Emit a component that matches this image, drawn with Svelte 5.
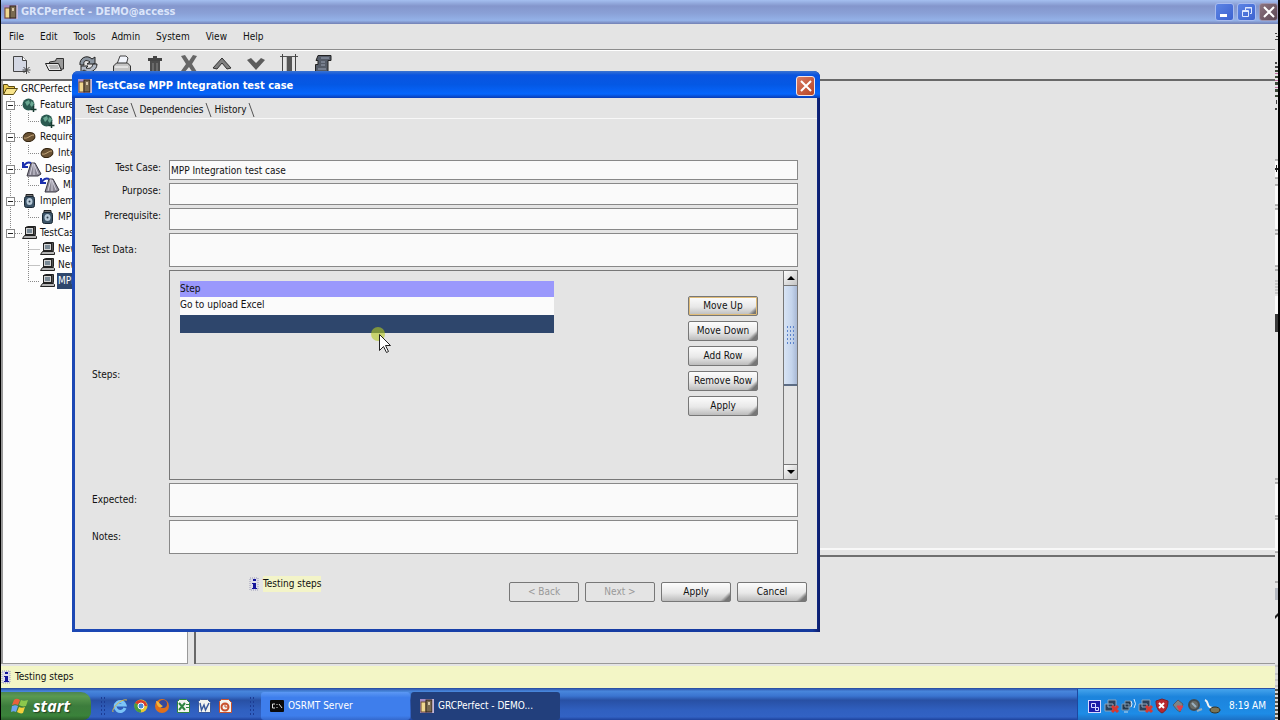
<script>
  const menus = ['File', 'Edit', 'Tools', 'Admin', 'System', 'View', 'Help'];
  const tools = ['New', 'Open', 'Refresh', 'Print', 'Trash', 'Delete', 'Up', 'Down', 'Columns', 'Report'];

  const tree = [
    { label: 'Feature', icon: 'globe', items: ['MPP'] },
    { label: 'Require', icon: 'bean', items: ['Inte'] },
    { label: 'Design', icon: 'design', items: ['MP'] },
    { label: 'Implem', icon: 'jar', items: ['MPP'] },
    { label: 'TestCas', icon: 'pc', items: ['New', 'New', 'MPP'] }
  ];

  const tabs = ['Test Case', 'Dependencies', 'History'];
  const stepActions = ['Move Up', 'Move Down', 'Add Row', 'Remove Row', 'Apply'];
  const launchers = ['Internet Explorer', 'Chrome', 'Firefox', 'Excel', 'Word', 'PowerPoint'];

  let activeTab = $state('Test Case');
  let testCase = $state('MPP Integration test case');
  let steps = $state(['Go to upload Excel', '']);
  let selectedStep = $state(1);
</script>

{#snippet appIcon()}
  <svg class="app-icon" width="14" height="14" viewBox="0 0 14 14" aria-hidden="true">
    <rect width="14" height="14" fill="#a58cc8" />
    <rect x="1" y="3" width="5" height="10" fill="#f0d890" stroke="#6a4a30" />
    <rect x="6" y="1" width="6" height="12" fill="#7a6a50" stroke="#33261c" />
    <path d="M8 3h2v3H8z" fill="#d8c8a8" />
    <path d="M13 0v14" stroke="#e4e0ec" />
  </svg>
{/snippet}

{#snippet infoIcon()}
  <svg width="10" height="14" viewBox="0 0 10 14" aria-hidden="true">
    <rect x="1" y="1" width="8" height="12" fill="#dcdce8" stroke="#9a9ab4" stroke-dasharray="1 1" />
    <path d="M4 2h3v2H4zM3 6h4v5h1v1H3v-1h1V7H3z" fill="#14149a" />
  </svg>
{/snippet}

{#snippet toolIcon(name)}
  <svg width="20" height="20" viewBox="0 0 20 20" fill="none" aria-hidden="true">
    {#if name === 'New'}
      <path d="M2.5 2.5h9l4 4v11h-13z" fill="#d4d8e4" stroke="#444" />
      <path d="M11.5 2.5v4h4" stroke="#444" fill="#fff" />
      <path d="M15.5 12v8M11.5 16h8M12.500 13l6 6M18.500 13l-6 6" stroke="#444" />
    {:else if name === 'Open'}
      <path d="M4.500 16V8l6-1 1-2.500h7V15z" fill="#9a9a9a" stroke="#333" />
      <path d="M.5 9.500h13l3 7H4z" fill="#e8e8e8" stroke="#222" />
      <path d="M4 12h9M5 14h9" stroke="#888" />
    {:else if name === 'Refresh'}
      <path d="M2 11C1 4 9 0 14 5l3-2v7h-8l3-2C8 5 5 7 6 11z" fill="#8b95a0" stroke="#222" />
      <path d="M19 10c0 7-8 10-13 6l-3 2v-6h7l-2 2c4 1 6 0 7-4z" fill="#b0b8c4" stroke="#222" />
    {:else if name === 'Print'}
      <path d="M5 10l3-8h6l2 2-2 7" fill="#f2f5fc" stroke="#444" />
      <path d="M1.500 12l3-3h11l3 3v6h-17z" fill="#c4c4c4" stroke="#333" />
      <path d="M3 13h13" stroke="#fff" />
    {:else if name === 'Trash'}
      <path d="M3 4h14v3H3zM8 2h4v2H8z" fill="#444" />
      <path d="M5 7h10v13H5z" fill="#4c4c4c" />
      <path d="M8 9v10M12 9v10" stroke="#888" />
    {:else if name === 'Delete'}
      <path d="M2 2l4-1 4 6 4-6 4 1-5 8 5 8-4 1-4-6-5 6-3-2 5-7z" fill="#666" />
    {:else if name === 'Up'}
      <path d="M1 14l9-10 9 10-4 1-5-6-5 6z" fill="#808080" stroke="#333" />
    {:else if name === 'Down'}
      <path d="M1 6l4-2 5 5 5-5 4 2-9 10z" fill="#5c5c5c" />
    {:else if name === 'Columns'}
      <path d="M1 2.500h18" stroke="#555" />
      <path d="M3.500 0v19M16.500 0v19" stroke="#444" />
      <rect x="7" y="3" width="6" height="16" fill="#555" />
      <path d="M7.500 3v16" stroke="#bbb" />
    {:else}
      <path d="M5 1.500h13v5h-3v12H2.500v-8H5V6.500H3z" fill="#555c68" stroke="#222" />
      <path d="M8 4h8M8 8h4M8 11h4M5 15h8" stroke="#9aa2b4" />
    {/if}
  </svg>
{/snippet}

{#snippet treeIcon(name)}
  <svg width={name === 'design' ? 20 : 15} height="16" viewBox="0 0 {name === 'design' ? 20 : 15} 16" fill="none" aria-hidden="true">
    {#if name === 'globe'}
      <circle cx="6.500" cy="7.500" r="6" fill="#2a5a50" />
      <path d="M3 5l4-2 1 3-3 3zM9 4l3 2-2 4-2-2z" fill="#6aa892" />
      <path d="M11.500 9v6M8.500 12.500h6" stroke="#153a30" stroke-width="1.500" />
    {:else if name === 'bean'}
      <ellipse cx="7" cy="8" rx="6" ry="4.500" fill="#6a5234" stroke="#33240f" transform="rotate(-12 7 8)" />
      <path d="M2 9c4 1 6-3 10-3" stroke="#c8aa7c" />
    {:else if name === 'design'}
      <path d="M5 15L9 2h4l6 11-3 2z" fill="#8a8794" stroke="#3a3844" />
      <path d="M8 14l3-12M12 14V3M16 13L12 3" stroke="#d4d2de" />
      <path d="M2 5c1-3 4-4 7-3M1 1v5h5" stroke="#1b2fae" stroke-width="2" />
    {:else if name === 'jar'}
      <path d="M4 1.500h7v2H4z" fill="#777" stroke="#222" />
      <rect x="2.500" y="3.500" width="10" height="11" rx="2" fill="#3c5468" stroke="#1a2834" />
      <ellipse cx="7.500" cy="8.500" rx="3" ry="3.500" fill="#b8cad8" />
      <circle cx="7.500" cy="8.500" r="1" fill="#2a3c4c" />
    {:else}
      <path d="M3.500 2.500l2-1h8v8l-2 1h-8z" fill="#555" stroke="#222" />
      <rect x="3.500" y="2.500" width="8" height="7" fill="#d4d4d4" stroke="#222" />
      <rect x="5" y="4" width="5" height="4" fill="#7a8a96" />
      <path d="M.5 13.500l2-3h11l1 1v2z" fill="#b4b4b4" stroke="#222" />
    {/if}
  </svg>
{/snippet}

{#snippet branch(last)}
  <svg width="19" height="16" viewBox="0 0 19 16" fill="none" aria-hidden="true">
    <path d={last ? 'M7.500 0V8' : 'M7.500 0V16'} stroke="#888" stroke-dasharray="1 1" />
    <path d="M12 8.500h7" stroke="#888" stroke-dasharray="1 1" />
    <rect x="3.500" y="4.500" width="8" height="8" fill="#fff" stroke="#888" />
    <path d="M5 8.500h5" stroke="#222" />
  </svg>
{/snippet}

{#snippet leaf(lastGroup, last)}
  <svg width="37" height="16" viewBox="0 0 37 16" fill="none" aria-hidden="true">
    {#if !lastGroup}
      <path d="M7.500 0V16" stroke="#888" stroke-dasharray="1 1" />
    {/if}
    <path d={last ? 'M25.500 0V8.500h12' : 'M25.500 0V16M25.500 8.500h12'} stroke="#888" stroke-dasharray="1 1" />
  </svg>
{/snippet}

{#snippet launchIcon(name)}
  <svg width="16" height="16" viewBox="0 0 16 16" fill="none" aria-hidden="true">
    {#if name === 'Internet Explorer'}
      <path d="M13 10a5 5 0 1 1 0-3H5" stroke="#7cc4f8" stroke-width="3" />
      <path d="M1 14C-1 11 9 0 15 2" stroke="#d8b84c" />
    {:else if name === 'Chrome'}
      <circle cx="8" cy="8" r="6.500" fill="#e8c832" />
      <path d="M8 8L2 5a6.500 6.500 0 0 1 12 3z" fill="#d83c2c" />
      <path d="M8 8L2 5a6.500 6.500 0 0 0 6 9.500z" fill="#4a9c40" />
      <circle cx="8" cy="8" r="3" fill="#4a88d8" stroke="#fff" />
    {:else if name === 'Firefox'}
      <circle cx="8" cy="8" r="7" fill="#e0701c" />
      <circle cx="9" cy="6" r="4" fill="#35489c" />
      <path d="M2 3c3 0 4 4 7 5-3 3-6 1-7-5z" fill="#f4b83c" />
    {:else}
      {@const color = name === 'Excel' ? '#2f8440' : name === 'Word' ? '#3a5a9c' : '#c8502c'}
      <path d="M4.500 1.500h7l3 3v10h-12v-11z" fill="#f4f4f0" stroke={color} />
      {#if name === 'Excel'}
        <path d="M4 5l6 7M10 5l-6 7" stroke={color} stroke-width="2" />
        <path d="M11 6.500h3M11 9.500h3" stroke={color} />
      {:else if name === 'Word'}
        <path d="M4 5l1.500 7L8 7l1.500 5L13 5" stroke={color} stroke-width="1.500" />
      {:else}
        <circle cx="8" cy="9" r="3.500" stroke={color} stroke-width="2" />
        <path d="M8 9V5M8 9h4" stroke={color} />
      {/if}
    {/if}
  </svg>
{/snippet}

<div class="desktop">
  <header class="titlebar">
    {@render appIcon()}
    <h1>GRCPerfect - DEMO@access</h1>
    <div class="controls">
      <button aria-label="Minimize">
        <svg width="12" height="12" viewBox="0 0 12 12"><path d="M1 8h7v3H1z" fill="#fff" /></svg>
      </button>
      <button aria-label="Restore">
        <svg width="12" height="12" viewBox="0 0 12 12" fill="none" stroke="#dfe8ff">
          <path d="M4.500 4V1.500h6v6H9M4 2h7" />
          <path d="M1.500 4.500h6v6h-6zM1 5.500h7" />
        </svg>
      </button>
      <button class="close" aria-label="Close">
        <svg width="12" height="12" viewBox="0 0 12 12"><path d="M1 1l10 10M11 1L1 11" stroke="#fff" stroke-width="2" /></svg>
      </button>
    </div>
  </header>

  <nav class="menubar">
    {#each menus as menu}
      <button>{menu}</button>
    {/each}
  </nav>

  <div class="toolbar">
    <div class="tools">
      {#each tools as tool}
        <button aria-label={tool}>{@render toolIcon(tool)}</button>
      {/each}
    </div>
  </div>

  <main class="workspace">
    <aside class="tree">
      <div class="node root">
        <svg width="15" height="14" viewBox="0 0 15 14" aria-hidden="true">
          <path d="M.5 12V2.500h4l1 2h6v3" fill="#e8c850" stroke="#5a4a10" />
          <path d="M.5 12.500l3-6h11l-4 6z" fill="#f8e48c" stroke="#5a4a10" />
        </svg>
        <span>GRCPerfect</span>
      </div>
      {#each tree as group, g}
        <div class="node">
          {@render branch(g === tree.length - 1)}
          {@render treeIcon(group.icon)}
          <span>{group.label}</span>
        </div>
        {#each group.items as item, i}
          <div class="node" class:selected={g === 4 && i === 2}>
            {@render leaf(g === tree.length - 1, i === group.items.length - 1)}
            {@render treeIcon(group.icon)}
            <span>{item}</span>
          </div>
        {/each}
      {/each}
    </aside>
    <section class="panes">
      <div class="list"></div>
      <div class="detail"></div>
    </section>
  </main>

  <div class="status">
    {@render infoIcon()}
    <span>Testing steps</span>
  </div>

  <footer class="taskbar">
    <button class="start">
      <svg width="18" height="18" viewBox="0 0 18 18" aria-hidden="true">
        <path d="M3 3c2-2 4-1 6 0L7 8C5 7 4 7 1 8z" fill="#e8603c" />
        <path d="M10 3c2 1 4 1 7 0l-2 6c-3 1-5 0-7-1z" fill="#8cc84c" />
        <path d="M1 9c3-1 4-1 6 0l-2 6c-2-1-3-1-5 0z" fill="#6aa4f0" />
        <path d="M8 10c2 1 4 1 6 0l-2 6c-2 1-4 0-6-1z" fill="#f4d03c" />
      </svg>
      start
    </button>
    <div class="grip"></div>
    <div class="launch">
      {#each launchers as name}
        <button aria-label={name}>{@render launchIcon(name)}</button>
      {/each}
    </div>
    <div class="grip"></div>
    <button class="task">
      <svg width="14" height="12" viewBox="0 0 14 12" aria-hidden="true">
        <rect width="14" height="12" rx="1" fill="#0a0a0a" />
        <path d="M5 4H2.500v4H5M7 4v1M7 7v1M9 4l3 4" fill="none" stroke="#ddd" />
      </svg>
      OSRMT Server
    </button>
    <button class="task active">
      {@render appIcon()}
      GRCPerfect - DEMO...
    </button>
    <div class="tray">
      <svg width="134" height="16" viewBox="0 0 134 16" fill="none" aria-hidden="true">
        <rect x="1.500" y="2.500" width="12" height="12" fill="#1c1ca8" stroke="#d8d8ff" />
        <path d="M4.500 5.500h4v4h-4zM8.500 9.500h3v3h-3z" stroke="#d8d8ff" />
        <path d="M21 2h8v7h-8zM18 6h8v7h-8z" fill="#2c4058" stroke="#8ca4bc" />
        <path d="M25 8l6 6M31 8l-6 6" stroke="#d83830" stroke-width="3" />
        <path d="M38 3h6v6h-6zM35 6h7v6h-7z" fill="#24384c" stroke="#7c94ac" />
        <path d="M37 14h4" stroke="#c4d8e8" />
        <path d="M44 3q2 3 0 6M47 1q3 5 0 9" stroke="#d8ecff" />
        <path d="M55 2h8v7h-8zM52 6h8v7h-8z" fill="#2c4058" stroke="#8ca4bc" />
        <path d="M59 8l6 6M65 8l-6 6" stroke="#d83830" stroke-width="3" />
        <path d="M69 3l6-2 6 2c0 6-2 10-6 12-4-2-6-6-6-12z" fill="#b82830" stroke="#802028" />
        <path d="M72 5l5 5M77 5l-5 5" stroke="#fff" stroke-width="2" />
        <path d="M86 7l5-5 5 4-3 8-3-2z" fill="#7c8488" stroke="#4c5c6c" />
        <path d="M90 8l6 0-3 5z" fill="#e0404c" stroke="#e0404c" />
        <circle cx="107" cy="7" r="5" fill="#686c68" stroke="#444c50" stroke-width="2" />
        <path d="M105 5l4 4M110 13l5-2" stroke="#98b0c0" stroke-width="2" />
        <path d="M118 2c5 2 0 7 8 8" stroke="#f4f4f4" stroke-width="2" />
        <ellipse cx="128" cy="12" rx="5" ry="3" fill="#7c7454" stroke="#343020" />
      </svg>
      <time>8:19 AM</time>
    </div>
  </footer>

  <!-- neighbouring monitor showing at the right edge -->
  <svg class="edge" width="3" height="720" viewBox="0 0 3 720" aria-hidden="true">
    <rect y="24" width="3" height="696" fill="#e4e4e4" />
    <path d="M0 33h2v1H0zM1 36h2v1H1zM0 39h3v1H0zM0 62h2v2H0zM0 66h3v2H0zM1 100h1v4H1zM0 108h2v2H0z" fill="#444" />
    <path d="M0 70h3v2H0zM0 76h3v2H0zM0 82h3v3H0zM0 89h3v3H0zM0 95h3v2H0z" fill="#3c4838" />
    <path d="M0 73h3v1H0zM0 80h3v1H0zM0 87h3v1H0z" fill="#b86c9c" />
    <path d="M0 160h3v18H0zM0 185h3v20H0zM0 209h3v21H0zM0 234h3v32H0zM0 296h3v18H0zM0 483h3v33H0zM0 519h3v33H0z" fill="#fafafa" />
    <path d="M0 160h3M0 178h3M0 185h3M0 205h3M0 209h3M0 230h3M0 234h3M0 266h3M0 270h3M0 479h3M0 483h3M0 516h3M0 519h3M0 552h3M0 582h3" stroke="#777" />
    <path d="M0 168h3v2H0zM1 165h1v7H1z" fill="#222" />
    <path d="M0 281h3M0 284h3M0 287h3M0 290h3M0 293h3" stroke="#aaa" />
    <rect y="314" width="3" height="18" fill="#3a3a3a" />
    <path d="M0 588h3v12H0z" fill="#b4b8c0" />
    <path d="M0 616l3-3v3l-3 3z" fill="#222" />
    <rect y="664" width="3" height="56" fill="#dcdcdc" />
    <path d="M0 666h3M0 674h3M0 680h3M0 686h3" stroke="#aaa" />
    <path d="M0 690h3M0 694h3M0 698h3M0 702h3M0 706h3M0 710h3M0 714h3M0 718h3" stroke="#55554c" stroke-width="2" />
  </svg>

  <div class="dialog" role="dialog" aria-labelledby="dialog-title">
    <header class="dialog-title">
      {@render appIcon()}
      <h2 id="dialog-title">TestCase MPP Integration test case</h2>
      <button class="dialog-close" aria-label="Close dialog">
        <svg width="12" height="12" viewBox="0 0 12 12"><path d="M1 1l10 10M11 1L1 11" stroke="#fff" stroke-width="2" /></svg>
      </button>
    </header>

    <div class="dialog-body">
      <div class="tabs" role="tablist">
        {#each tabs as tab}
          <button role="tab" aria-selected={tab === activeTab} class:active={tab === activeTab} onclick={() => (activeTab = tab)}>
            {tab}
          </button>
          <svg width="7" height="16" viewBox="0 0 7 16" aria-hidden="true">
            <path d="M1 1l5 14" stroke="#555" fill="none" />
          </svg>
        {/each}
      </div>

      <div class="form">
        <label class="short" for="test-case">Test Case:</label>
        <input id="test-case" class="first" type="text" bind:value={testCase} />
        <label class="short" for="purpose">Purpose:</label>
        <input id="purpose" type="text" />
        <label class="short" for="prerequisite">Prerequisite:</label>
        <input id="prerequisite" type="text" />
        <label for="test-data">Test Data:</label>
        <textarea id="test-data"></textarea>

        <span class="label">Steps:</span>
        <div class="steps">
          <table>
            <thead>
              <tr><th>Step</th></tr>
            </thead>
            <tbody>
              {#each steps as step, i}
                <tr class:selected={i === selectedStep} onclick={() => (selectedStep = i)}><td>{step}</td></tr>
              {/each}
            </tbody>
          </table>
          <div class="step-actions">
            {#each stepActions as action, i}
              <button class="metal" class:focused={i === 0}>{action}</button>
            {/each}
          </div>
          <div class="scrollbar">
            <button aria-label="Scroll up">
              <svg width="8" height="4" viewBox="0 0 8 4"><path d="M0 4l4-4 4 4z" /></svg>
            </button>
            <div class="track">
              <div class="thumb"><div class="bumps"></div></div>
            </div>
            <button aria-label="Scroll down">
              <svg width="8" height="4" viewBox="0 0 8 4"><path d="M0 0l4 4 4-4z" /></svg>
            </button>
          </div>
        </div>

        <label for="expected">Expected:</label>
        <textarea id="expected"></textarea>
        <label for="notes">Notes:</label>
        <textarea id="notes"></textarea>
      </div>

      <div class="dialog-footer">
        <div class="hint">
          {@render infoIcon()}
          <span>Testing steps</span>
        </div>
        <button class="metal" disabled>&lt; Back</button>
        <button class="metal" disabled>Next &gt;</button>
        <button class="metal">Apply</button>
        <button class="metal">Cancel</button>
      </div>
    </div>
  </div>

  <svg class="cursor" width="24" height="28" viewBox="0 0 24 28" aria-hidden="true">
    <circle cx="7" cy="7" r="7" fill="#b4c820" fill-opacity="0.6" />
    <path d="M8.500 7.500v16l4-4 3 6 2-1-3-6h5z" fill="#fff" stroke="#222" />
  </svg>
</div>

<style>
  :global(body) {
    margin: 0;
    background: #000;
  }

  .desktop {
    position: relative;
    display: flex;
    flex-direction: column;
    min-height: 100vh;
    box-sizing: border-box;
    background: #e4e4e4;
    border-right: 2px solid #000;
    border-left: 1px solid #000;
    overflow: hidden;
    font-family: 'DejaVu Sans Condensed', 'DejaVu Sans', sans-serif;
    font-size: 10px;
    line-height: 16px;
    color: #111;
  }

  button,
  input,
  textarea {
    font: inherit;
    color: inherit;
    margin: 0;
    padding: 0;
    border: 0;
    box-sizing: border-box;
  }

  button {
    background: none;
    white-space: nowrap;
  }

  svg {
    display: block;
    flex: none;
  }

  h1,
  h2 {
    margin: 0;
    flex: 1;
    font-size: 11px;
    font-weight: bold;
  }

  /* Main window */
  .titlebar {
    display: flex;
    align-items: center;
    gap: 3px;
    height: 24px;
    box-sizing: border-box;
    padding-left: 3px;
    background: linear-gradient(#a4bff0, #8496cc 25%, #8aa0d6 55%, #94b2e8 85%, #7280b4);
  }

  .titlebar h1 {
    color: #dbe5fa;
  }

  .controls {
    display: flex;
    gap: 3px;
  }

  .controls button {
    display: flex;
    align-items: center;
    justify-content: center;
    width: 19px;
    height: 18px;
    border: 1px solid #a8bcf0;
    border-radius: 3px;
    background: linear-gradient(135deg, #5c84e4, #3c62d0);
  }

  .controls .close {
    background: linear-gradient(135deg, #8c7480, #5c4854);
    border-color: #9c94b0;
  }

  .menubar {
    display: flex;
    align-items: center;
    gap: 16px;
    height: 26px;
    box-sizing: border-box;
    padding-left: 8px;
    border-bottom: 1px solid #8c8c8c;
  }

  .toolbar {
    height: 31px;
    box-sizing: border-box;
    padding: 3px 10px;
    border-top: 1px solid #fff;
    border-bottom: 2px solid #686868;
  }

  .tools {
    display: flex;
    justify-content: space-between;
    max-width: 322px;
  }

  .workspace {
    display: flex;
    flex: 1;
    gap: 6px;
    padding-bottom: 2px;
  }

  .tree {
    width: 187px;
    box-sizing: border-box;
    border: 1px solid #999;
    border-width: 0 1px 1px 2px;
    background: #fdfdfd;
    overflow: hidden;
  }

  .node {
    display: flex;
    align-items: center;
    gap: 2px;
    height: 16px;
    white-space: nowrap;
  }

  .node svg:first-child {
    margin-right: -2px;
  }

  .node.root svg:first-child {
    margin-right: 0;
  }

  .node span {
    padding: 0 1px;
  }

  .node.selected span {
    background: #2e466c;
    color: #fff;
  }

  .panes {
    display: flex;
    flex-direction: column;
    flex: 1;
    border-left: 2px solid #686868;
  }

  .list {
    flex: 1;
    border-bottom: 2px solid #f8f8f8;
  }

  .detail {
    height: 106px;
    margin-top: 5px;
    border-top: 2px solid #707070;
    border-bottom: 1px solid #999;
  }

  .status {
    display: flex;
    align-items: center;
    gap: 4px;
    height: 22px;
    background: #f3f6c6;
  }

  /* Taskbar */
  .taskbar {
    display: flex;
    align-items: stretch;
    height: 32px;
    box-sizing: border-box;
    padding-top: 4px;
    background: linear-gradient(#26489c, #4886dc 10%, #3a74d0 25%, #2850a4 38%, #3060c0 70%, #3262c4 90%, #1e429c);
  }

  .start {
    display: flex;
    align-items: center;
    gap: 4px;
    width: 90px;
    padding-left: 10px;
    border-radius: 0 10px 8px 0;
    background: linear-gradient(#4c8450, #5a9a50 15%, #3c7c3c 50%, #3a823a 85%, #2c602c);
    color: #fff;
    font-family: 'Open Sans', sans-serif;
    font-size: 16px;
    font-weight: bold;
    font-style: italic;
    text-shadow: 1px 1px 1px #234423;
  }

  .grip {
    width: 6px;
    margin: 4px 0 4px 9px;
    background: radial-gradient(#1c3c94 1px, transparent 1px) 0 0 / 3px 4px;
  }

  .launch {
    display: flex;
    align-items: center;
    gap: 5px;
    padding-left: 6px;
  }

  .launch + .grip {
    margin-left: 16px;
    margin-right: 6px;
  }

  .task {
    display: flex;
    align-items: center;
    gap: 4px;
    width: 149px;
    margin-right: 1px;
    padding-left: 9px;
    border-radius: 3px;
    background: linear-gradient(#5c98f4, #3e7eec 20%, #3e7eec 85%, #3468cc);
    color: #fff;
  }

  .task.active {
    background: #223f7c;
  }

  .tray {
    display: flex;
    align-items: center;
    gap: 8px;
    margin: -3px 0 0 auto;
    padding: 2px 12px 0 9px;
    border-left: 1px solid #1c48a0;
    background: linear-gradient(#46a4ec, #1c84dc 25%, #1e8ce6 80%, #1c70c4);
    color: #fff;
  }

  .edge {
    position: absolute;
    top: 0;
    right: 0;
  }

  /* Test case window */
  .dialog {
    position: absolute;
    top: 71px;
    left: 71px;
    width: 748px;
    box-sizing: border-box;
    padding: 0 3px 3px;
    border-radius: 6px 6px 0 0;
    background: linear-gradient(90deg, #1c48b4, #14389c 99%, #0c1c6c);
  }

  .dialog-title {
    display: flex;
    align-items: center;
    gap: 4px;
    height: 27px;
    margin: 0 -3px;
    padding: 2px 5px 0 6px;
    box-sizing: border-box;
    border-radius: 6px 6px 0 0;
    background: linear-gradient(#3c74d0, #0a54e0 15%, #0458e4 50%, #0666fc 85%, #0a3cb4);
    color: #fff;
  }

  .dialog-close {
    display: flex;
    align-items: center;
    justify-content: center;
    width: 19px;
    height: 20px;
    border: 1px solid #f4e4e4;
    border-radius: 3px;
    background: linear-gradient(135deg, #d87c64, #b84424);
  }

  .dialog-body {
    background: #e4e4e4;
  }

  .tabs {
    display: flex;
    align-items: center;
    height: 21px;
    padding: 3px 0 0 11px;
    box-sizing: border-box;
    border-bottom: 1px solid #f8f8f8;
  }

  .tabs svg {
    margin: 0 2px;
  }

  .form {
    display: grid;
    grid-template-columns: 69px 1fr;
    gap: 3px 8px;
    padding: 41px 19px 0 17px;
  }

  .form label,
  .form .label {
    align-self: center;
  }

  .form .short {
    align-self: start;
    justify-self: end;
  }

  .form input,
  .form textarea {
    display: block;
    width: 100%;
    height: 22px;
    padding: 0 1px;
    border: 1px solid #888;
    border-radius: 0;
    background: #fafafa;
    resize: none;
    outline: none;
  }

  .form .first {
    height: 20px;
  }

  .form textarea {
    height: 34px;
  }

  .steps {
    display: flex;
    align-items: flex-start;
    height: 210px;
    box-sizing: border-box;
    border: 1px solid #777;
  }

  table {
    width: 374px;
    margin: 10px 0 0 10px;
    border-collapse: collapse;
  }

  th,
  td {
    height: 18px;
    padding: 0;
    text-align: left;
    font-weight: normal;
    line-height: 16px;
    background: #fbfbfb;
  }

  td {
    vertical-align: top;
  }

  th {
    height: 16px;
    background: #9a98fc;
  }

  tr.selected td {
    background: #2e466c;
    color: #fff;
  }

  .step-actions {
    display: flex;
    flex-direction: column;
    gap: 5px;
    margin: 25px 25px 0 auto;
  }

  .metal {
    width: 70px;
    height: 20px;
    border: 1px solid #777;
    border-radius: 2px;
    background: linear-gradient(135deg, transparent 88%, #777 94%), linear-gradient(#fcfcfc, #e8e8e8 55%, #bcbcbc);
  }

  .metal.focused {
    box-shadow: inset 0 0 0 1px #e0bc78;
  }

  .metal:disabled {
    background: #e4e4e4;
    color: #999;
  }

  .scrollbar {
    display: flex;
    flex-direction: column;
    align-self: stretch;
    width: 14px;
    box-sizing: border-box;
    border-left: 1px solid #777;
  }

  .scrollbar button {
    display: flex;
    align-items: center;
    justify-content: center;
    height: 14px;
    background: linear-gradient(135deg, #fcfcfc, #c4c4c4);
  }

  .track {
    flex: 1;
    border-top: 1px solid #777;
    border-bottom: 1px solid #777;
  }

  .thumb {
    display: flex;
    align-items: center;
    justify-content: center;
    height: 55%;
    border-bottom: 2px solid #5c6c84;
    background: linear-gradient(90deg, #d8e4f4, #c4d4ec 60%, #a8b8d4);
  }

  .bumps {
    width: 10px;
    height: 20px;
    background: radial-gradient(#5c84cc 1px, transparent 1px) 0 0 / 3px 4px;
  }

  .dialog-footer {
    display: flex;
    align-items: center;
    gap: 6px;
    padding: 28px 10px 27px 174px;
  }

  .hint {
    display: flex;
    align-items: center;
    gap: 4px;
    margin: -16px auto 0 0;
  }

  .hint span {
    background: #f3f4c8;
  }

  .cursor {
    position: absolute;
    top: 327px;
    left: 370px;
  }
</style>
